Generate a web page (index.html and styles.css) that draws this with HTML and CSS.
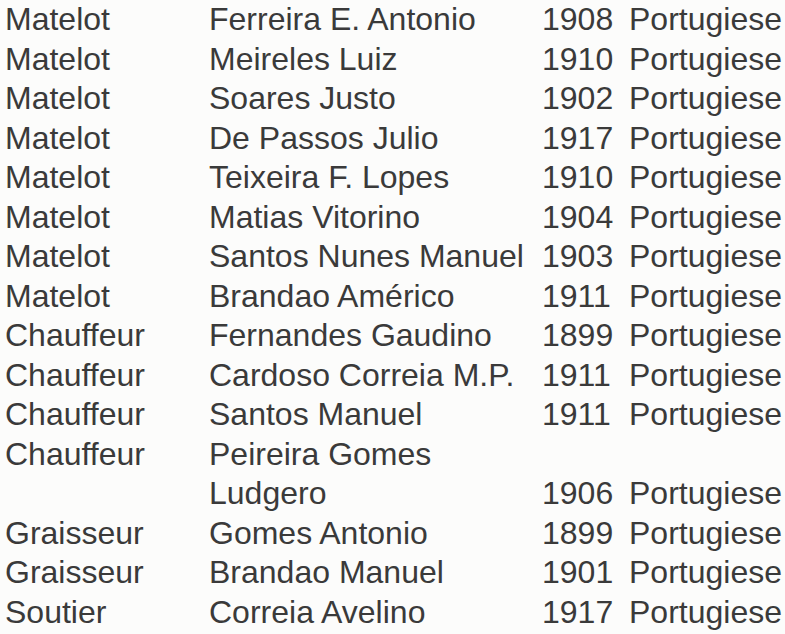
FILE: index.html
```html
<!DOCTYPE html>
<html lang="fr">
<head>
<meta charset="utf-8">
<title>Équipage</title>
<link rel="stylesheet" href="styles.css">
</head>
<body>
<div class="crew">
  <div class="row"><span class="role">Matelot</span><span class="name">Ferreira E. Antonio</span><span class="year">1908</span><span class="nat">Portugiese</span></div>
  <div class="row"><span class="role">Matelot</span><span class="name">Meireles Luiz</span><span class="year">1910</span><span class="nat">Portugiese</span></div>
  <div class="row"><span class="role">Matelot</span><span class="name">Soares Justo</span><span class="year">1902</span><span class="nat">Portugiese</span></div>
  <div class="row"><span class="role">Matelot</span><span class="name">De Passos Julio</span><span class="year">1917</span><span class="nat">Portugiese</span></div>
  <div class="row"><span class="role">Matelot</span><span class="name">Teixeira F. Lopes</span><span class="year">1910</span><span class="nat">Portugiese</span></div>
  <div class="row"><span class="role">Matelot</span><span class="name">Matias Vitorino</span><span class="year">1904</span><span class="nat">Portugiese</span></div>
  <div class="row"><span class="role">Matelot</span><span class="name">Santos Nunes Manuel</span><span class="year">1903</span><span class="nat">Portugiese</span></div>
  <div class="row"><span class="role">Matelot</span><span class="name">Brandao Américo</span><span class="year">1911</span><span class="nat">Portugiese</span></div>
  <div class="row"><span class="role">Chauffeur</span><span class="name">Fernandes Gaudino</span><span class="year">1899</span><span class="nat">Portugiese</span></div>
  <div class="row"><span class="role">Chauffeur</span><span class="name">Cardoso Correia M.P.</span><span class="year">1911</span><span class="nat">Portugiese</span></div>
  <div class="row"><span class="role">Chauffeur</span><span class="name">Santos Manuel</span><span class="year">1911</span><span class="nat">Portugiese</span></div>
  <div class="row"><span class="role">Chauffeur</span><span class="name">Peireira Gomes<br>Ludgero</span><span class="year bottom">1906</span><span class="nat bottom">Portugiese</span></div>
  <div class="row"><span class="role">Graisseur</span><span class="name">Gomes Antonio</span><span class="year">1899</span><span class="nat">Portugiese</span></div>
  <div class="row"><span class="role">Graisseur</span><span class="name">Brandao Manuel</span><span class="year">1901</span><span class="nat">Portugiese</span></div>
  <div class="row"><span class="role">Soutier</span><span class="name">Correia Avelino</span><span class="year">1917</span><span class="nat">Portugiese</span></div>
</div>
</body>
</html>
```
FILE: styles.css
```css
html, body {
  margin: 0;
  padding: 0;
  background: #fcfcfb;
}
body {
  font-family: "Liberation Sans", Arial, sans-serif;
  font-size: 32px;
  line-height: 39.5px;
  color: #3a3a3a;
}
.crew {
  padding-left: 5px;
  display: flex;
  flex-direction: column;
}
.row {
  display: grid;
  grid-template-columns: 204px 333px 87px auto;
  white-space: nowrap;
}
.bottom {
  align-self: end;
}
```
